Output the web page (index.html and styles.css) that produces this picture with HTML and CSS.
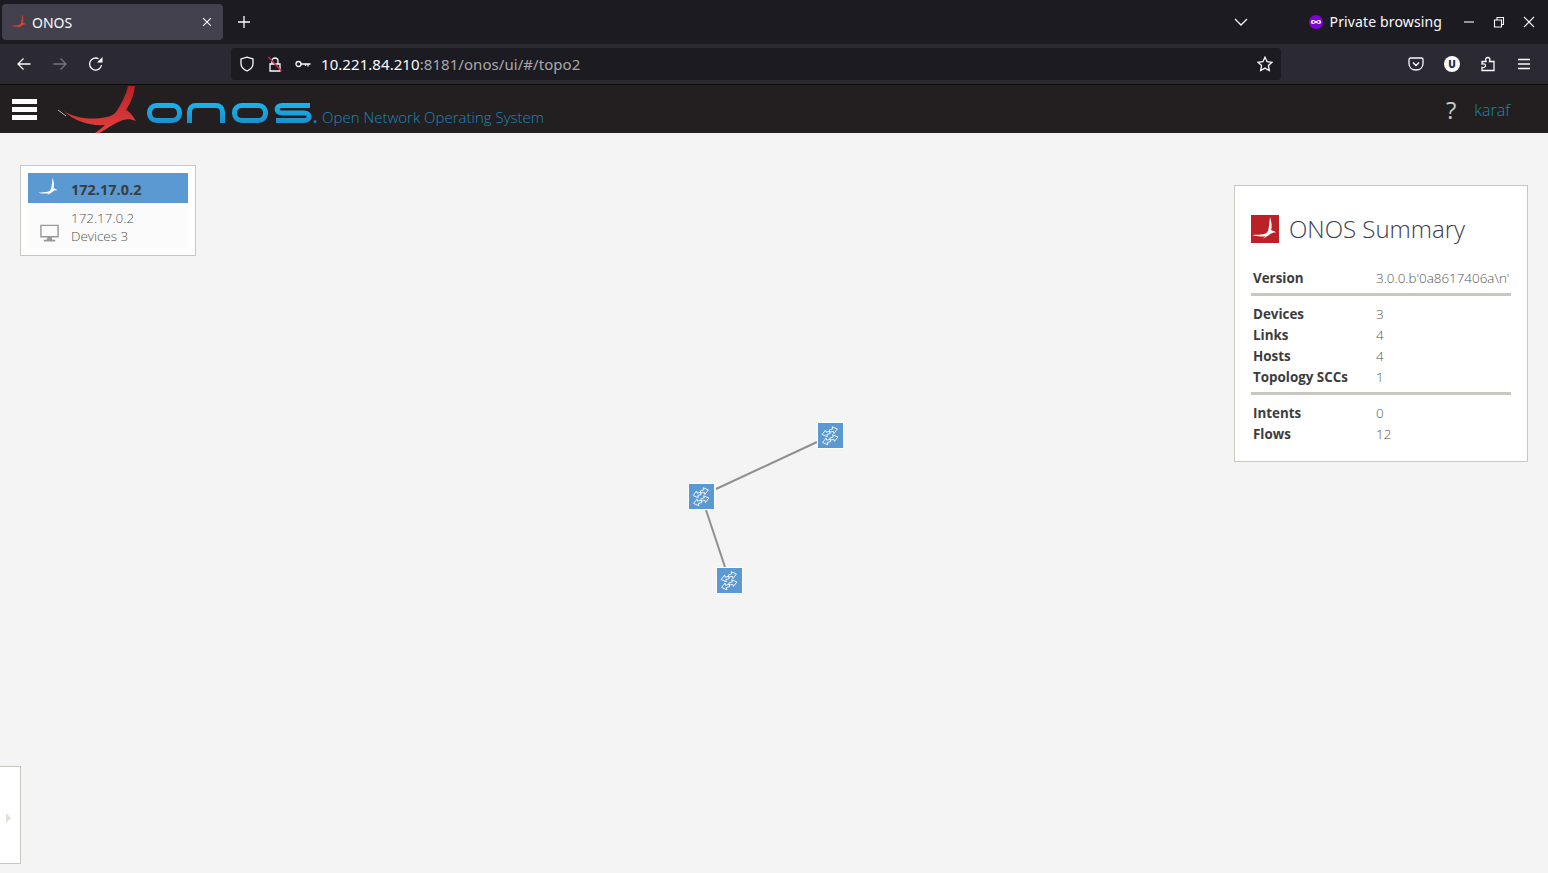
FILE: index.html
```html
<!DOCTYPE html>
<html lang="en">
<head>
    <meta charset="UTF-8">
    <title>ONOS</title>
    <link rel="stylesheet" href="styles.css">
</head>
<body>

<svg class="defs" width="0" height="0">
    <symbol id="bird" viewBox="0 0 80 48">
        <path d="M7 26C16 32 30 35 44 33C52 32 57 30 59 27C64 20 69 10 71 1L78 1C77 10 73 19 69 25C72 26 76 31 79 36C74 34 70 34 66 35C60 37 52 42 43 48L38 48C42 45 46 42 48 40C34 41 18 37 7 26Z"/>
    </symbol>
    <symbol id="mark" viewBox="0 0 28 28">
        <path d="M19 2C21 8 21 13 20 15C21.500 15.500 23.500 16 25 17.500C22.500 17.200 21 17.800 19 19.200C17 20.700 14 22.500 12 23.500C13 22.500 14 21.700 14.500 21.200C10 21.700 5 21.500 1.500 20C6 19.800 11 19.800 14 18.800C16 18 17 16.500 17.500 14C18 10 18.800 6 19 2Z"/>
    </symbol>
    <symbol id="sw" viewBox="0 0 25 25">
        <g fill="none" stroke="#fff" stroke-width="0.8">
            <path transform="translate(15.500 7) rotate(-15)" d="M-4 -1.200H-0.500V-3.500L4 0L-0.500 3.500V1.200H-4Z"/>
            <path transform="translate(8 10.500) rotate(-15)" d="M4 -1.200H0.500V-3.500L-4 0L0.500 3.500V1.200H4Z"/>
            <path transform="translate(16 15) rotate(-15)" d="M-4 -1.200H-0.500V-3.500L4 0L-0.500 3.500V1.200H-4Z"/>
            <path transform="translate(8.500 18.500) rotate(-15)" d="M4 -1.200H0.500V-3.500L-4 0L0.500 3.500V1.200H4Z"/>
        </g>
    </symbol>
</svg>

<!-- Browser tabs -->
<div class="tabbar">
    <div class="tab">
        <svg class="favicon"><use href="#mark"/></svg>
        <span class="tab-title">ONOS</span>
        <svg class="ico tab-close" viewBox="0 0 16 16"><path d="M3.500 3.500L12.500 12.500M12.500 3.500L3.500 12.500"/></svg>
    </div>
    <div class="btn"><svg class="ico" viewBox="0 0 16 16"><path d="M8 2V14M2 8H14"/></svg></div>
    <div class="btn tabs-list"><svg class="ico" viewBox="0 0 16 16"><path d="M2 5L8 11L14 5"/></svg></div>
    <div class="private">
        <svg class="mask" viewBox="0 0 14 14"><circle cx="7" cy="7" r="7" fill="#8000d7"/><path d="M1.800 7C1.800 5.200 3.600 4.800 5 5.200C6 5.500 6.400 6 7 6C7.600 6 8 5.500 9 5.200C10.400 4.800 12.200 5.200 12.200 7C12.200 8.800 10.400 9.200 9 8.800C8 8.500 7.600 8 7 8C6.400 8 6 8.500 5 8.800C3.600 9.200 1.800 8.800 1.800 7Z" fill="#fff"/><circle cx="4.500" cy="7" r="1.100" fill="#8000d7"/><circle cx="9.500" cy="7" r="1.100" fill="#8000d7"/></svg>
        <span class="private-label">Private browsing</span>
    </div>
    <div class="win"><svg class="ico" viewBox="0 0 16 16"><path d="M3 8H13"/></svg></div>
    <div class="win"><svg class="ico" viewBox="0 0 16 16"><path d="M3.500 6H10.500V13H3.500ZM6 6V3.500H12.500V10.500H10.500"/></svg></div>
    <div class="win"><svg class="ico" viewBox="0 0 16 16"><path d="M3 3L13 13M13 3L3 13"/></svg></div>
</div>

<!-- Browser toolbar -->
<div class="toolbar">
    <div class="btn"><svg class="ico" viewBox="0 0 16 16"><path d="M14.500 8H2M7.500 2.500L2 8L7.500 13.500"/></svg></div>
    <div class="btn dim"><svg class="ico" viewBox="0 0 16 16"><path d="M1.500 8H14M8.500 2.500L14 8L8.500 13.500"/></svg></div>
    <div class="btn"><svg class="ico" viewBox="0 0 16 16"><path d="M13.500 9A6 6 0 1 1 10.500 2.800"/><path class="solid" d="M14.500 1V6.500H9Z"/></svg></div>
    <div class="urlbar">
        <svg class="ico" viewBox="0 0 16 16"><path d="M8 1.200L14 3V7.500C14 11 11.500 13.500 8 15C4.500 13.500 2 11 2 7.500V3Z"/></svg>
        <svg class="ico" viewBox="0 0 16 16"><path d="M3 8H13V15H3ZM5 8V5C5 1 11 1 11 5V8"/><path class="slash" d="M1.500 1L14.500 15"/></svg>
        <svg class="ico" viewBox="0 0 16 16"><circle cx="3.500" cy="8" r="2.500"/><path d="M6 8H15.500M13 8V10.500M10.500 8V10"/></svg>
        <span class="url"><b>10.221.84.210</b>:8181/onos/ui/#/topo2</span>
        <svg class="ico star" viewBox="0 0 16 16"><path d="M8 1.200L10.100 5.700L15 6.300L11.400 9.600L12.300 14.500L8 12.100L3.700 14.500L4.600 9.600L1 6.300L5.900 5.700Z"/></svg>
    </div>
    <div class="btn push"><svg class="ico" viewBox="0 0 16 16"><path d="M2.500 2H13.500C14.300 2 15 2.700 15 3.500V7.500C15 11.500 12 14 8 14C4 14 1 11.500 1 7.500V3.500C1 2.700 1.700 2 2.500 2ZM5 6.500L8 9.500L11 6.500"/></svg></div>
    <div class="btn"><span class="ublock">U</span></div>
    <div class="btn"><svg class="ico" viewBox="0 0 16 16"><path d="M2 5.500H6C5 3 6 1.500 7.800 1.500C9.600 1.500 10.500 3 9.500 5.500H14V14.500H2V11.500C4 12 5.500 11 5.500 9.500C5.500 8 4 7.500 2 8Z"/></svg></div>
    <div class="btn"><svg class="ico" viewBox="0 0 16 16"><path d="M2 3.500H14M2 8H14M2 12.500H14"/></svg></div>
</div>

<!-- ONOS masthead -->
<div class="masthead">
    <div class="nav-btn"><span></span><span></span><span></span></div>
    <svg class="logo" viewBox="0 0 260 48">
        <defs>
            <linearGradient id="red" x1="0" y1="0" x2="0" y2="1"><stop offset="0" stop-color="#b92025"/><stop offset="1" stop-color="#e2423f"/></linearGradient>
            <linearGradient id="blue" gradientUnits="userSpaceOnUse" x1="0" y1="18" x2="0" y2="38"><stop offset="0" stop-color="#1cb2ec"/><stop offset="1" stop-color="#1a90cb"/></linearGradient>
        </defs>
        <path d="M1 25L9 31" stroke="#bbb" stroke-width="1" fill="none"/>
        <use href="#bird" width="80" height="48" fill="url(#red)"/>
        <g fill="none" stroke="url(#blue)" stroke-width="5">
            <rect x="92.500" y="20.500" width="30" height="15" rx="7"/>
            <path d="M132.500 38V27C132.500 23 135 20.500 139 20.500H159C163 20.500 165.500 23 165.500 27V38"/>
            <rect x="177.500" y="20.500" width="31" height="15" rx="7"/>
            <path d="M253 20.500H225C218.500 20.500 218.500 28 225 28H247C254 28 254 35.500 247 35.500H219"/>
        </g>
        <circle cx="258" cy="36.500" r="1.500" fill="#1a7fb0"/>
    </svg>
    <span class="tagline">Open Network Operating System</span>
    <span class="help">?</span>
    <span class="user">karaf</span>
</div>

<!-- Topology view -->
<div class="topo">
    <svg class="canvas">
        <g stroke="#8f8f8f" stroke-width="2">
            <line x1="716" y1="356" x2="817" y2="309"/>
            <line x1="706" y1="377" x2="725" y2="434"/>
        </g>
        <g class="node">
            <rect x="817.500" y="289.500" width="26" height="26"/>
            <use href="#sw" x="818" y="290" width="25" height="25"/>
            <rect x="688.500" y="350.500" width="26" height="26"/>
            <use href="#sw" x="689" y="351" width="25" height="25"/>
            <rect x="716.500" y="434.500" width="26" height="26"/>
            <use href="#sw" x="717" y="435" width="25" height="25"/>
        </g>
    </svg>

    <div class="panel cluster">
        <div class="cluster-head">
            <svg class="cluster-bird"><use href="#mark"/></svg>
            <span>172.17.0.2</span>
        </div>
        <div class="cluster-body">
            <svg class="monitor" viewBox="0 0 20 18"><path d="M1 1H19V13H1Z" fill="none" stroke="#999" stroke-width="1.500"/><path d="M8 13H12L13 16H16V18H4V16H7Z" fill="#999"/></svg>
            <div>
                <div>172.17.0.2</div>
                <div>Devices 3</div>
            </div>
        </div>
    </div>

    <div class="panel summary">
        <div class="summary-head">
            <div class="summary-icon"><svg><use href="#mark"/></svg></div>
            <h2>ONOS Summary</h2>
        </div>
        <div class="row"><b>Version</b><span>3.0.0.b'0a8617406a\n'</span></div>
        <hr>
        <div class="row"><b>Devices</b><span>3</span></div>
        <div class="row"><b>Links</b><span>4</span></div>
        <div class="row"><b>Hosts</b><span>4</span></div>
        <div class="row"><b>Topology SCCs</b><span>1</span></div>
        <hr>
        <div class="row"><b>Intents</b><span>0</span></div>
        <div class="row"><b>Flows</b><span>12</span></div>
    </div>

    <div class="panel side-tab"><i></i></div>
</div>

</body>
</html>
```

FILE: styles.css
```css
* {
    box-sizing: border-box;
}
html, body {
    height: 100%;
}
body {
    margin: 0;
    display: flex;
    flex-direction: column;
    overflow: hidden;
    font-family: "Open Sans", sans-serif;
    background-color: #f4f4f4;
}
.defs {
    position: absolute;
}
.ico {
    width: 16px;
    height: 16px;
    flex: none;
    fill: none;
    stroke: #fbfbfe;
    stroke-width: 1.300;
}
.ico .solid {
    fill: #fbfbfe;
    stroke: none;
}
.ico .slash {
    stroke: #e22850;
}
.btn {
    width: 36px;
    height: 36px;
    flex: none;
    display: flex;
    align-items: center;
    justify-content: center;
}
.dim .ico {
    stroke: #77767e;
}

/* tabs */
.tabbar {
    height: 44px;
    flex: none;
    display: flex;
    align-items: center;
    padding: 0 4px 0 2px;
    background-color: #1c1b22;
    color: #fbfbfe;
    font-family: "Noto Sans", sans-serif;
    font-size: 14px;
}
.tab {
    width: 221px;
    height: 36px;
    margin-right: 3px;
    padding: 0 9px 0 8px;
    display: flex;
    align-items: center;
    background-color: #42414d;
    border-radius: 4px;
}
.favicon {
    width: 18px;
    height: 18px;
    fill: #d9403c;
}
.tab-title {
    margin-left: 4px;
}
.tab-close {
    margin-left: auto;
    width: 14px;
    height: 14px;
}
.tabs-list {
    margin-left: auto;
    margin-right: 50px;
}
.private {
    display: flex;
    align-items: center;
    gap: 7px;
    margin-right: 12px;
}
.private-label {
    margin-top: -2px;
    letter-spacing: 0.130px;
}
.mask {
    width: 14px;
    height: 14px;
}
.win {
    width: 30px;
    display: flex;
    justify-content: center;
}
.win .ico {
    stroke-width: 1.100;
}

/* toolbar */
.toolbar {
    height: 41px;
    flex: none;
    display: flex;
    align-items: center;
    padding: 0 6px;
    background-color: #2b2a33;
    border-bottom: 1px solid #0c0c0d;
}
.urlbar {
    width: 1050px;
    height: 32px;
    margin-left: 117px;
    padding: 0 8px;
    display: flex;
    align-items: center;
    gap: 12px;
    background-color: #1c1b22;
    border-radius: 4px;
    font-family: "Noto Sans", sans-serif;
    font-size: 15px;
    color: #a8a8ad;
}
.url {
    margin-left: -2px;
    letter-spacing: 0.060px;
}
.url b {
    font-weight: 400;
    color: #fbfbfe;
}
.star {
    margin-left: auto;
}
.push {
    margin-left: auto;
}
.ublock {
    width: 16px;
    height: 16px;
    border-radius: 50%;
    background-color: #fbfbfe;
    color: #2b2a33;
    font-size: 10px;
    font-weight: 800;
    line-height: 16px;
    text-align: center;
}

/* masthead */
.masthead {
    height: 48px;
    flex: none;
    display: flex;
    align-items: center;
    padding: 0 38px 0 12px;
    background-color: #231f20;
}
.nav-btn {
    width: 25px;
    display: flex;
    flex-direction: column;
    gap: 3px;
    margin-top: 1px;
}
.nav-btn span {
    height: 5px;
    background-color: #fff;
}
.logo {
    width: 260px;
    height: 48px;
    margin-left: 20px;
}
.tagline {
    margin: 15px 0 0 5px;
    font-size: 15px;
    font-weight: 300;
    color: #1c86ba;
}
.help {
    margin: 0 18px 0 auto;
    font-size: 24px;
    color: #c8c8c8;
}
.user {
    margin-top: 2px;
    font-size: 16px;
    font-weight: 300;
    color: #1a87a8;
}

/* topology */
.topo {
    flex: 1;
    position: relative;
}
.canvas {
    position: absolute;
    left: 0;
    top: 0;
    width: 100%;
    height: 100%;
}
.node rect {
    fill: #5b99d2;
    stroke: #fff;
    stroke-width: 1;
}
.panel {
    position: absolute;
    background-color: #fff;
    border: 1px solid #c8c8c0;
}
.cluster {
    left: 20px;
    top: 32px;
    width: 176px;
    height: 91px;
    padding: 7px;
}
.cluster-head {
    height: 30px;
    display: flex;
    align-items: center;
    padding: 3px 0 0 9px;
    background-color: #5b99d2;
    font-size: 14.500px;
    font-weight: 700;
    color: #3c3c3c;
}
.cluster-bird {
    width: 23px;
    height: 23px;
    margin: -4px 11px 0 0;
    fill: #fff;
}
.cluster-body {
    height: 45px;
    display: flex;
    align-items: flex-end;
    padding: 6px 0 3px 12px;
    background-color: #fbfbfb;
    font-size: 13.400px;
    line-height: 18px;
    font-weight: 300;
    color: #555;
}
.monitor {
    width: 19px;
    height: 18px;
    margin: 0 12px 3px 0;
}
.summary {
    right: 20px;
    top: 52px;
    width: 294px;
    height: 277px;
    padding: 27px 16px 0;
}
.summary-head {
    display: flex;
    align-items: center;
    gap: 10px;
    margin-bottom: 22px;
}
.summary-icon {
    width: 28px;
    height: 28px;
    background-color: #bb2228;
    fill: #fff;
}
.summary-icon svg {
    display: block;
    width: 28px;
    height: 28px;
}
.summary h2 {
    margin: 0;
    font-size: 24px;
    font-weight: 300;
    color: #3c3c4c;
    line-height: 32px;
}
.row {
    height: 21px;
    padding-left: 2px;
    display: flex;
    align-items: center;
    font-size: 13.400px;
    color: #3c3c3c;
}
.row b {
    width: 123px;
    flex: none;
}
.row span {
    font-size: 13.400px;
    font-weight: 300;
    white-space: nowrap;
    color: #555;
}
.summary hr {
    height: 3px;
    margin: 5px 0 7px;
    border: none;
    background-color: #c8c8c0;
}
.side-tab {
    left: -1px;
    top: 633px;
    width: 22px;
    height: 98px;
    display: flex;
    align-items: center;
    padding-left: 6px;
}
.side-tab i {
    margin-top: 6px;
    border-left: 5px solid #dfe0d8;
    border-top: 5px solid transparent;
    border-bottom: 5px solid transparent;
}
```
